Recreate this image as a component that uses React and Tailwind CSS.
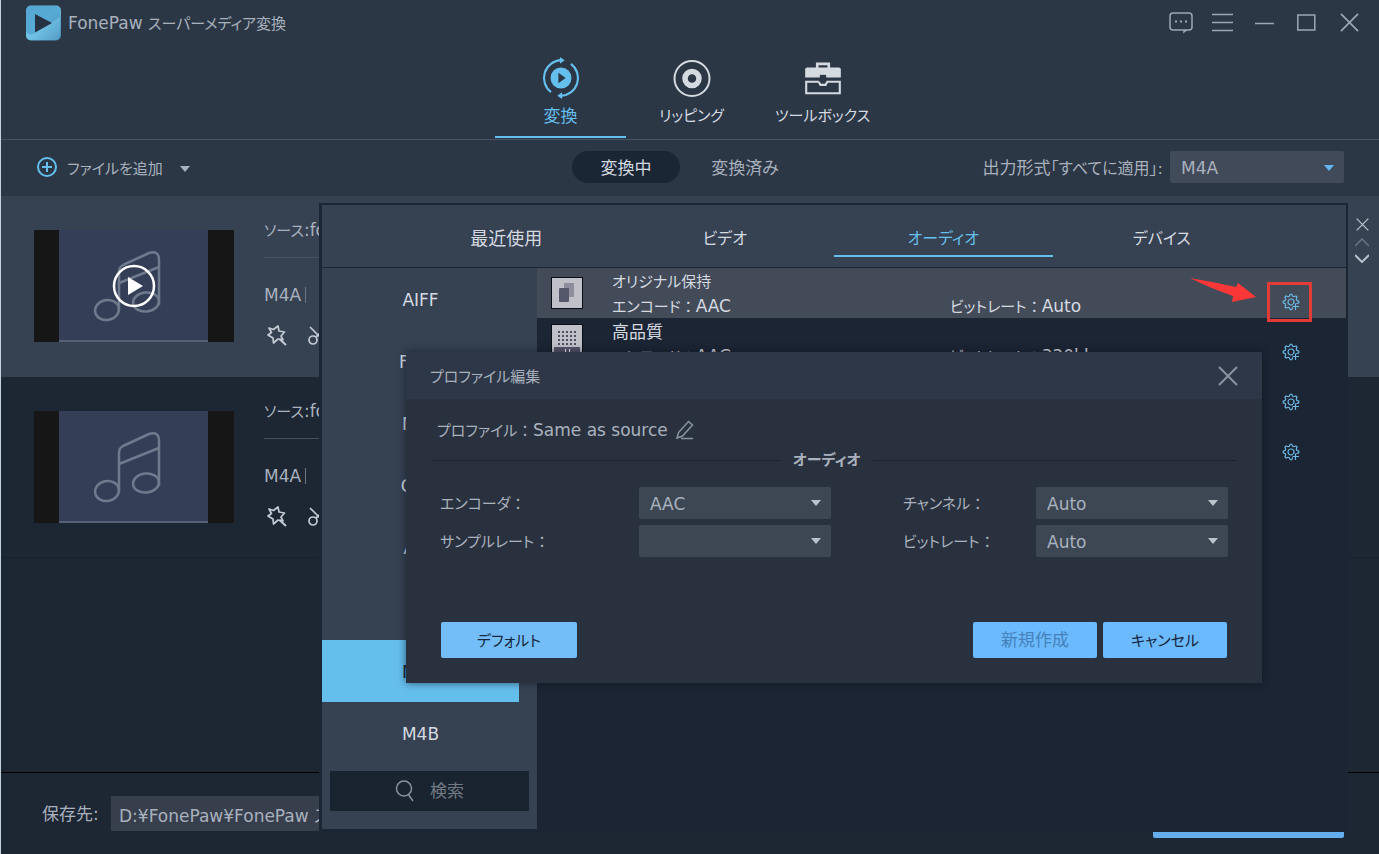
import React, { useState } from 'react';

const FORMATS = ['AIFF', 'FLAC', 'MKA', 'OGG', 'AC3', 'AU', 'M4A', 'M4B'];

const PROFILES = [
  { id: 'original', title: 'オリジナル保持', size: 'text-[15px]', encode: 'AAC', bitrate: 'Auto', icon: 'pages' },
  { id: 'high', title: '高品質', size: 'text-[17px]', encode: 'AAC', bitrate: '320kbps', icon: 'grid' },
  { id: 'medium', title: '中品質', size: 'text-[17px]', encode: 'AAC', bitrate: '192kbps', icon: 'grid' },
  { id: 'low', title: '低品質', size: 'text-[17px]', encode: 'AAC', bitrate: '128kbps', icon: 'grid' },
];

const TABS = [
  { name: '最近使用', size: 'text-lg' },
  { name: 'ビデオ', size: 'text-base' },
  { name: 'オーディオ', size: 'text-base' },
  { name: 'デバイス', size: 'text-base' },
];

function Logo() {
  return (
    <svg width="36" height="36" viewBox="0 0 36 36">
      <defs>
        <linearGradient id="logo" x1="0" y1="0" x2="1" y2="1">
          <stop offset="0" stopColor="#5fb4dc" />
          <stop offset="0.5" stopColor="#6cbfe4" />
          <stop offset="1" stopColor="#3f83ad" />
        </linearGradient>
      </defs>
      <rect x="1" y="0.500" width="35" height="35" rx="5" fill="url(#logo)" />
      <path d="M1 8 Q1 1 8 1 H30 Q35 1 35 6 V12 L8 29 Q3 31 1 26 Z" fill="#4a9cc9" opacity="0.6" />
      <path d="M1 26 Q3 31 8 29 L35 12 V30 Q35 35 30 35 H6 Q1 35 1 30 Z" fill="#7cc8ea" opacity="0.35" />
      <path d="M10 9 L27 18 L10 27.500 Z" fill="#263244" />
    </svg>
  );
}

function Caret({ className }) {
  return (
    <svg width="10" height="6" viewBox="0 0 10 6" className={className}>
      <path d="M0 0 H10 L5 6 Z" fill="currentColor" />
    </svg>
  );
}

function CrossIcon({ size, width }) {
  return (
    <svg width={size} height={size} viewBox="0 0 20 20" fill="none" stroke="currentColor" strokeWidth={width}>
      <path d="M1 1 L19 19 M19 1 L1 19" />
    </svg>
  );
}

// small kana label followed by a full-width colon
function Caption({ children }) {
  return (
    <span className="text-[15px]">
      {children}
      <span className="[font-feature-settings:normal]">：</span>
    </span>
  );
}

function ConvertIcon() {
  return (
    <svg width="42" height="42" viewBox="0 0 40 40" fill="none" stroke="currentColor" strokeWidth="2">
      <path d="M20 3 A17 17 0 0 0 10.500 33.500" />
      <path d="M29.500 6.500 A17 17 0 0 1 20 37" />
      <path d="M19 0 L23.500 3 L19 6.500 Z" fill="currentColor" stroke="none" />
      <path d="M21 33.500 L16.500 37 L21 40 Z" fill="currentColor" stroke="none" />
      <circle cx="20" cy="20" r="10" fill="currentColor" stroke="none" />
      <path d="M17.500 15 L24.500 20 L17.500 25 Z" fill="#2c3746" stroke="none" />
    </svg>
  );
}

function DiscIcon() {
  return (
    <svg width="42" height="42" viewBox="0 0 42 42" fill="none" stroke="currentColor">
      <circle cx="21" cy="21.500" r="17.500" strokeWidth="2" />
      <circle cx="21" cy="21.500" r="7" strokeWidth="5.500" />
    </svg>
  );
}

function ToolboxIcon() {
  return (
    <svg width="42" height="42" viewBox="0 0 40 40" fill="none" stroke="currentColor">
      <path d="M14.500 11 V6.500 H25.500 V11" strokeWidth="2.500" />
      <path d="M5 10 H35 Q37 10 37 12 V19.500 H3 V12 Q3 10 5 10 Z" fill="currentColor" stroke="none" />
      <path d="M16 23.500 H4 V34.500 H36 V23.500 H24 L22.500 26.500 H17.500 L16 23.500" strokeWidth="2" />
      <rect x="17" y="17" width="6" height="7" fill="#2c3746" stroke="none" />
    </svg>
  );
}

function StarIcon() {
  return (
    <svg width="22" height="22" viewBox="0 0 22 22" fill="none" stroke="currentColor" strokeWidth="1.700">
      <path
        d="M4 4 L8.500 5.500 L13 2 L14 7 L19.500 8 L16 12 L18 16 L13 15 L8.500 19 L8 14 L3 11 L6.500 8.500 Z"
        strokeLinejoin="round"
      />
      <path d="M14.500 15 L21 21" strokeWidth="2" />
    </svg>
  );
}

function ScissorsIcon() {
  return (
    <svg width="22" height="22" viewBox="0 0 22 22" fill="none" stroke="currentColor" strokeWidth="1.700">
      <circle cx="6" cy="16" r="4" />
      <circle cx="18" cy="16" r="4" />
      <path d="M3 3 L14 14 M20 3 L9 13" />
    </svg>
  );
}

// outline of an eight-tooth gear around 9,9
const gearPath = Array.from({ length: 32 }, (_, i) => {
  const r = i % 4 < 2 ? 7.8 : 6;
  const a = (i / 32) * Math.PI * 2 - Math.PI / 32;
  return `${i ? 'L' : 'M'}${(9 + r * Math.cos(a)).toFixed(2)} ${(9 + r * Math.sin(a)).toFixed(2)}`;
}).join(' ') + ' Z';

function GearIcon({ back }) {
  return (
    <svg width="18" height="18" viewBox="0 0 18 18" fill="none" stroke="currentColor" strokeWidth="1.200">
      <path d={gearPath} />
      <circle cx="9" cy="9" r="3" />
      <rect x="11" y="11" width="7" height="7" fill={back} stroke="none" />
      <path d="M13.500 10.500 V17 M10.500 13.500 H17" />
    </svg>
  );
}

function ProfileIcon({ type }) {
  return (
    <svg width="32" height="32" viewBox="0 0 32 32">
      <rect x="0.500" y="0.500" width="31" height="31" fill="#bfc0c8" stroke="#0b0d14" />
      {type === 'pages' ? (
        <>
          <rect x="13" y="6" width="10" height="14" rx="1" fill="#8d8d9b" />
          <rect x="8" y="11" width="10" height="14" rx="1" fill="#55576a" />
        </>
      ) : (
        <>
          {[7, 11, 15, 19].map(y =>
            [7, 11, 15, 19, 23].map(x => <rect key={`${x}-${y}`} x={x} y={y} width="2" height="2" fill="#4d4f60" />)
          )}
          <rect x="3" y="23" width="26" height="8" rx="1" fill="#55556a" />
          <path d="M14.500 25 V29 M18.500 25 V29" stroke="#ffffff" />
        </>
      )}
    </svg>
  );
}

function Thumbnail({ playing }) {
  return (
    <svg width="200" height="112" viewBox="0 0 200 112" fill="none">
      <rect width="200" height="112" fill="#161616" />
      <rect x="25" width="149" height="112" fill="#343f57" />
      <rect x="25" y="110" width="149" height="2" fill="#566175" />
      <g stroke="#6f7a8d" strokeWidth="2.500">
        <ellipse cx="73" cy="80" rx="12" ry="10" transform="rotate(-12 73 80)" />
        <ellipse cx="112" cy="72" rx="13" ry="9.500" transform="rotate(-6 112 72)" />
        <path d="M85 80 V42 Q85 37 89 35 L115 23 Q125 20 125 30 V75" />
        <path d="M85 53 L125 37" />
      </g>
      {playing && (
        <>
          <circle cx="100" cy="56" r="20" stroke="#ffffff" strokeWidth="2.500" />
          <path d="M94 47 L109 56 L94 65 Z" fill="#ffffff" />
        </>
      )}
    </svg>
  );
}

function MediaRow({ active }) {
  return (
    <li className={`flex h-[181px] pl-[33px] ${active ? 'bg-[#364152]' : 'border-b border-[#19212e]'}`}>
      <div className="pt-[34px]">
        <Thumbnail playing={active} />
      </div>
      <div className="ml-[30px] flex-1 pt-[22px] text-[#a9b1bd]">
        <p className="leading-6"><span className="text-[15px]">ソース</span>:fonepaw.m4a</p>
        <hr className="mt-[14px] border-[#465061]" />
        <p className="mt-[25px] flex items-center gap-1 leading-6">
          M4A <span className="h-4 w-px bg-[#6b7584]" />
        </p>
        <div className="mt-[17px] flex gap-5 pl-px text-[#c5cbd4]">
          <button aria-label="エフェクト"><StarIcon /></button>
          <button aria-label="カット"><ScissorsIcon /></button>
        </div>
      </div>
      <div className="flex w-[34px] flex-col items-center gap-[7px] pt-[22px] text-[#b8c0cb]">
        {active && (
          <>
            <button aria-label="削除"><CrossIcon size={13} width={2} /></button>
            <button aria-label="上へ" className="text-[#697486]">
              <svg width="14" height="9" viewBox="0 0 14 9" fill="none" stroke="currentColor" strokeWidth="1.500">
                <path d="M0 8 L7 1 L14 8" />
              </svg>
            </button>
            <button aria-label="下へ">
              <svg width="14" height="9" viewBox="0 0 14 9" fill="none" stroke="currentColor" strokeWidth="2">
                <path d="M0 1 L7 8 L14 1" />
              </svg>
            </button>
          </>
        )}
      </div>
    </li>
  );
}

function Field({ id, label, value, gap }) {
  return (
    <div className="flex items-center">
      <label htmlFor={id} className={`pt-[2px] ${gap}`}><Caption>{label}</Caption></label>
      <div className="relative">
        <select id={id} defaultValue={value} className="h-8 w-48 appearance-none rounded-xs bg-[#3d4754] px-[11px] pt-1">
          <option>{value}</option>
        </select>
        <Caret className="pointer-events-none absolute right-[10px] top-[13px] text-[#bcc3cd]" />
      </div>
    </div>
  );
}

function ProfileDialog() {
  return (
    <section
      role="dialog"
      aria-label="プロファイル編集"
      className="absolute left-[84px] right-[84px] top-[147px] bg-[#29313f] text-[#a9b1bd] shadow-[0_0_8px_rgba(10,16,26,0.600)]"
    >
      <header className="flex h-[47px] items-center justify-between bg-[#2d3747] px-6">
        <h2 className="pt-1 text-[15px]">プロファイル編集</h2>
        <button aria-label="閉じる" className="text-[#8a93a0]"><CrossIcon size={20} width={2} /></button>
      </header>
      <div className="px-[26px] pb-[25px] pt-[19px]">
        <div className="flex h-6 items-center pl-[5px] leading-6">
          <span className="w-24 whitespace-nowrap"><Caption>プロファイル</Caption></span>
          <span>Same as source</span>
          <button aria-label="名前を編集" className="ml-2 text-[#8a93a0]">
            <svg width="18" height="20" viewBox="0 0 18 20" fill="none" stroke="currentColor" strokeWidth="1.500">
              <path d="M1 18 L2.500 12.500 L12.500 1.500 L16.500 5 L6.500 16 Z M5 18.500 H17" />
            </svg>
          </button>
        </div>
        <div className="mt-[6px] flex items-center gap-3">
          <hr className="flex-[24] border-[#1b2330]" />
          <h3 className="text-[15px] leading-6 font-bold">オーディオ</h3>
          <hr className="flex-[25] border-[#1b2330]" />
        </div>
        <div className="mt-[15px] flex justify-between px-2">
          <div className="space-y-[6px]">
            <Field id="encoder" label="エンコーダ" value="AAC" gap="w-[199px]" />
            <Field id="sample" label="サンプルレート" value="" gap="w-[199px]" />
          </div>
          <div className="space-y-[6px]">
            <Field id="channel" label="チャンネル" value="Auto" gap="w-[133px]" />
            <Field id="bitrate" label="ビットレート" value="Auto" gap="w-[133px]" />
          </div>
        </div>
        <div className="mt-[65px] flex gap-[6px] px-[9px] text-[#16263c]">
          <button className="mr-auto h-9 w-[136px] rounded-xs bg-[#73bdf8] pt-[2px] text-[15px]">デフォルト</button>
          <button disabled className="h-9 w-[124px] rounded-xs bg-[#6bb9fe] pt-[2px] text-[#4482b8]">新規作成</button>
          <button className="h-9 w-[124px] rounded-xs bg-[#6bb9fe] pt-[2px] text-[15px]">キャンセル</button>
        </div>
      </div>
    </section>
  );
}

function FormatPopup() {
  const [format, setFormat] = useState('M4A');
  const [tab, setTab] = useState('オーディオ');

  return (
    <div className="absolute left-[318px] right-[31px] top-[7px] z-10 border-2 border-b-[3px] border-l-[3px] border-[#1c2534] bg-[#1c2534]">
      <nav className="grid grid-cols-4 border-b border-[#1c2534] bg-[#364152] px-[75px] pb-[10px]">
        {TABS.map(t => (
          <button
            key={t.name}
            onClick={() => setTab(t.name)}
            className={`h-[52px] border-b-2 pt-[17px] ${t.size} leading-6 ${
              tab === t.name ? 'border-[#65bfed] text-[#65bfed]' : 'border-transparent text-[#d5dae1]'
            }`}
          >
            {t.name}
          </button>
        ))}
      </nav>
      <div className="flex">
        <aside className="w-[215px] bg-[#364152] pb-[18px]">
          <ul className="pr-[18px] text-[#d5dae1]">
            {FORMATS.map(name => (
              <li key={name}>
                <button
                  onClick={() => setFormat(name)}
                  className={`h-[62px] w-full pt-1 ${format === name ? 'bg-[#65bfed] text-[#16263c]' : ''}`}
                >
                  {name}
                </button>
              </li>
            ))}
          </ul>
          <label className="mx-2 mt-[7px] flex h-10 items-center bg-[#1a2431] pl-[65px]">
            <svg width="20" height="22" viewBox="0 0 20 22" fill="none" stroke="#8a929d" strokeWidth="1.500">
              <circle cx="9" cy="8.500" r="7.500" />
              <path d="M13 14 L18 21" />
            </svg>
            <input
              type="search"
              aria-label="検索"
              placeholder="検索"
              className="ml-[15px] w-20 bg-transparent pt-[2px] placeholder:text-[#727a84]"
            />
          </label>
        </aside>
        <ul className="flex-1 text-[#d5dae1]">
          {PROFILES.map((p, i) => (
            <li key={p.id} className={`relative flex h-[50px] items-start pl-[14px] ${i === 0 ? 'bg-[#434b58]' : ''}`}>
              <div className={i === 0 ? 'pt-[9px]' : 'pt-[6px]'}>
                <ProfileIcon type={p.icon} />
              </div>
              <div className="ml-[29px] flex-1 pt-[2px]">
                <p className={`${p.size} leading-6`}>{p.title}</p>
                <div className="flex leading-6">
                  <span className="w-[338px]"><Caption>エンコード</Caption>{p.encode}</span>
                  <span><Caption>ビットレート</Caption>{p.bitrate}</span>
                </div>
              </div>
              <button aria-label="プロファイルを編集" className="mr-[46px] mt-[25px] text-[#6cb8e4]">
                <GearIcon back={i === 0 ? '#434b58' : '#1c2534'} />
              </button>
              {i === 0 && (
                <div className="pointer-events-none absolute right-[34px] top-[14px] z-10 h-10 w-[45px] border-[3px] border-[#e33b38]">
                  <svg width="68" height="26" viewBox="0 0 68 26" className="absolute -left-[80px] -top-[7px]">
                    <path d="M0 0 Q24 4 46 9 L48 5 L66 19 L42 24 L43 18 Q20 10 0 0 Z" fill="#fb3737" />
                  </svg>
                </div>
              )}
            </li>
          ))}
        </ul>
      </div>
      <ProfileDialog />
    </div>
  );
}

function App() {
  return (
    <div className="flex min-h-screen flex-col overflow-hidden border-l border-[#c3d3dd] bg-[#1d2633] font-['DejaVu_Sans','Noto_Sans_CJK_JP',sans-serif] text-[17px] text-[#a9b1bd] [font-feature-settings:'palt']">
      <header className="border-b border-[#475262] bg-[#2c3746]">
        <div className="flex h-[45px] items-center pl-6 pr-[9px]">
          <Logo />
          <h1 className="ml-[7px] pt-[3px]">FonePaw <span className="text-[15px]">スーパーメディア変換</span></h1>
          <div className="ml-auto flex text-[#9da6b2]">
            <button aria-label="フィードバック" className="flex w-[42px] justify-center">
              <svg width="24" height="24" viewBox="0 0 24 24" fill="none" stroke="currentColor" strokeWidth="1.500">
                <rect x="1" y="2" width="22" height="17" rx="3" />
                <path d="M14 22.500 L19 19 H14.500 Z" fill="currentColor" stroke="none" />
                <path d="M6 10.500 H8 M11 10.500 H13 M16 10.500 H18" strokeWidth="2" />
              </svg>
            </button>
            <button aria-label="メニュー" className="flex w-[42px] justify-center">
              <svg width="22" height="24" viewBox="0 0 22 24" stroke="currentColor" strokeWidth="1.500">
                <path d="M0 3.500 H21 M0 11.500 H21 M0 19.500 H21" />
              </svg>
            </button>
            <button aria-label="最小化" className="flex w-[42px] justify-center">
              <svg width="20" height="24" viewBox="0 0 20 24" stroke="currentColor" strokeWidth="1.500">
                <path d="M0 12.500 H19" />
              </svg>
            </button>
            <button aria-label="最大化" className="flex w-[42px] justify-center">
              <svg width="20" height="24" viewBox="0 0 20 24" fill="none" stroke="currentColor" strokeWidth="1.500">
                <rect x="0.800" y="4" width="17" height="15" />
              </svg>
            </button>
            <button aria-label="閉じる" className="flex w-[42px] items-center justify-center">
              <CrossIcon size={19} width={1.8} />
            </button>
          </div>
        </div>
        <nav className="flex h-[94px] justify-center pl-[3px] text-[#d5dae1]">
          <button className="flex h-[93px] w-[131px] flex-col items-center border-b-2 border-[#65bfed] pt-3 text-[#65bfed]">
            <ConvertIcon />
            <span className="mt-[5px] leading-6">変換</span>
          </button>
          <button className="flex h-[93px] w-[131px] flex-col items-center pt-3">
            <DiscIcon />
            <span className="mt-[5px] text-[15px] leading-6">リッピング</span>
          </button>
          <button className="flex h-[93px] w-[131px] flex-col items-center pt-3">
            <ToolboxIcon />
            <span className="mt-[5px] text-[15px] leading-6">ツールボックス</span>
          </button>
        </nav>
      </header>

      <div className="grid h-14 grid-cols-[1fr_auto_1fr] items-center bg-[#2c3746] pb-[2px]">
        <button className="flex items-center pl-[35px]">
          <svg width="22" height="22" viewBox="0 0 22 22" fill="none" stroke="#65bfed" strokeWidth="2">
            <circle cx="11" cy="11" r="9" />
            <path d="M11 6 V16 M6 11 H16" />
          </svg>
          <span className="ml-[9px] pt-1 text-[15px]">ファイルを追加</span>
          <Caret className="ml-[17px] mt-1" />
        </button>
        <div className="flex gap-[11px] pr-[9px]">
          <button className="h-8 w-[108px] rounded-full bg-[#1b2635] pt-1 text-[#d5dae1]">変換中</button>
          <button className="h-8 w-[108px] pt-1">変換済み</button>
        </div>
        <div className="flex items-center justify-end gap-[7px] pr-[35px]">
          <label htmlFor="output" className="pt-[3px]">出力形式<span className="text-base">「すべてに適用」:</span></label>
          <div className="relative">
            <select
              id="output"
              defaultValue="M4A"
              className="h-8 w-[174px] appearance-none rounded-xs bg-[#414a59] px-[11px] pt-1"
            >
              <option>M4A</option>
            </select>
            <Caret className="pointer-events-none absolute right-[10px] top-[14px] text-[#65b5ee]" />
          </div>
        </div>
      </div>

      <main className="relative flex-1">
        <ul>
          <MediaRow active />
          <MediaRow />
        </ul>
        <FormatPopup />
      </main>

      <footer className="flex h-[82px] items-start justify-between border-t border-black pl-[41px] pr-[35px]">
        <div className="flex items-center pt-[23px]">
          <label htmlFor="folder" className="w-[69px] pt-[2px]">保存先:</label>
          <input
            id="folder"
            defaultValue="D:¥FonePaw¥FonePaw スーパーメディア変換"
            className="h-[35px] w-[420px] bg-[#373f4d] px-2 pt-px"
          />
        </div>
        <button className="mt-[15px] h-[50px] w-[191px] rounded-xs bg-[#65aeee] text-[#16263c]">変換</button>
      </footer>
    </div>
  );
}

export default App;
